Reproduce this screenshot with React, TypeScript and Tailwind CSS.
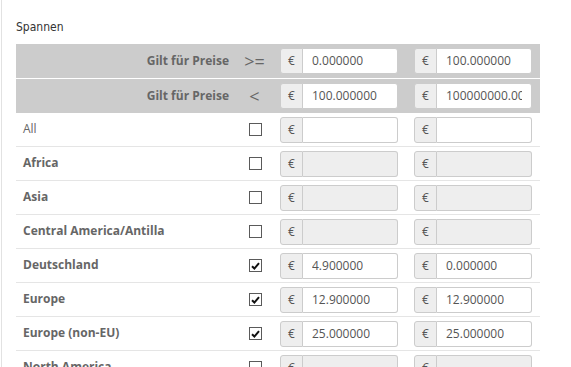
import React from 'react';

type Row = { name: string; bold: boolean; checked: boolean; enabled: boolean; from: string; to: string };

const rows: Row[] = [
  { name: 'All', bold: false, checked: false, enabled: true, from: '', to: '' },
  { name: 'Africa', bold: true, checked: false, enabled: false, from: '', to: '' },
  { name: 'Asia', bold: true, checked: false, enabled: false, from: '', to: '' },
  { name: 'Central America/Antilla', bold: true, checked: false, enabled: false, from: '', to: '' },
  { name: 'Deutschland', bold: true, checked: true, enabled: true, from: '4.900000', to: '0.000000' },
  { name: 'Europe', bold: true, checked: true, enabled: true, from: '12.900000', to: '12.900000' },
  { name: 'Europe (non-EU)', bold: true, checked: true, enabled: true, from: '25.000000', to: '25.000000' },
  { name: 'North America', bold: true, checked: false, enabled: false, from: '', to: '' },
];

const EuroInput = ({ value, enabled = true }: { value: string; enabled?: boolean }) => (
  <div className="flex h-[26px] w-[118px]">
    <span className="flex w-[23px] shrink-0 items-center justify-center rounded-l-[3px] border border-[#cccccc] bg-[#eeeeee] text-[12px] text-[#555]">
      €
    </span>
    <div
      className={`flex min-w-0 flex-1 items-center rounded-r-[3px] border border-l-0 border-[#cccccc] px-[9px] text-[12px] text-[#555] ${
        enabled ? 'bg-white' : 'bg-[#eeeeee]'
      }`}
    >
      <span className="block overflow-hidden whitespace-nowrap">{value}</span>
    </div>
  </div>
);

const Check = ({ checked }: { checked: boolean }) => (
  <span className="flex h-[13px] w-[13px] items-center justify-center border border-[#5a5a5a] bg-white">
    {checked && (
      <svg width="9" height="8" viewBox="0 0 9 8">
        <path d="M1 4.2 L3.4 6.5 L8 1.2" fill="none" stroke="#111" strokeWidth="2" />
      </svg>
    )}
  </span>
);

const App = () => {
  return (
    <div
      className="h-[367px] w-[571px] overflow-hidden bg-white"
      style={{ fontFamily: '"Open Sans", "Liberation Sans", sans-serif' }}
    >
      <div className="ml-px h-full border-l border-[#e2e2e2] pl-[14px]">
        <h2
          className="pt-[19px] pb-[8px] text-[12px] leading-[17px] text-[#333]"
          style={{ fontFamily: '"DejaVu Sans Condensed", "DejaVu Sans", sans-serif', fontStretch: 'condensed' }}
        >
          Spannen
        </h2>

        <div className="w-[524px]">
          <div className="grid h-[35px] grid-cols-[221px_35px_134px_134px] items-center border-b border-white bg-[#cccccc]">
            <div className="pr-2 text-right text-[12px] font-bold text-[#666]">Gilt für Preise</div>
            <div className="text-center text-[18px] leading-[20px] text-[#666]">&gt;=</div>
            <div className="px-2"><EuroInput value="0.000000" /></div>
            <div className="px-2"><EuroInput value="100.000000" /></div>
          </div>
          <div className="grid h-[34px] grid-cols-[221px_35px_134px_134px] items-center bg-[#cccccc]">
            <div className="pr-2 text-right text-[12px] font-bold text-[#666]">Gilt für Preise</div>
            <div className="text-center text-[18px] leading-[20px] text-[#666]">&lt;</div>
            <div className="px-2"><EuroInput value="100.000000" /></div>
            <div className="px-2"><EuroInput value="100000000.000000" /></div>
          </div>

          {rows.map((r) => (
            <div
              key={r.name}
              className="grid h-[34px] grid-cols-[221px_35px_134px_134px] items-center border-b border-[#e5e5e5]"
            >
              <div
                className={`self-start pl-[7px] pt-[7px] text-[12px] leading-[18px] text-[#666] ${
                  r.bold ? 'font-bold' : 'font-normal'
                }`}
              >
                {r.name}
              </div>
              <div className="flex justify-center pl-px">
                <Check checked={r.checked} />
              </div>
              <div className="px-2"><EuroInput value={r.from} enabled={r.enabled} /></div>
              <div className="px-2"><EuroInput value={r.to} enabled={r.enabled} /></div>
            </div>
          ))}
        </div>
      </div>
    </div>
  );
};

export default App;
